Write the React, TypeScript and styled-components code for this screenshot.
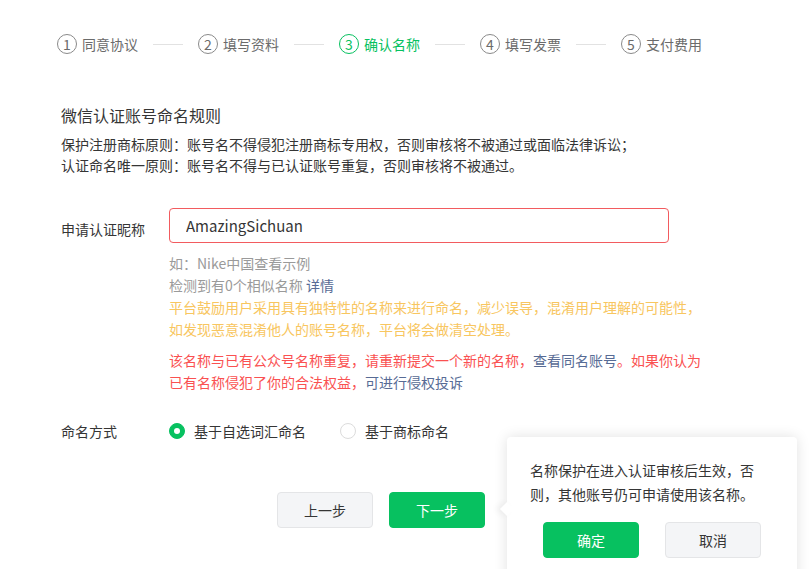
import React from "react";
import styled, { createGlobalStyle } from "styled-components";

const GlobalStyle = createGlobalStyle`
  html, body {
    margin: 0;
    padding: 0;
    background: #ffffff;
  }
  body {
    font-family: "Noto Sans CJK SC", "Liberation Sans", sans-serif;
    color: #353535;
    font-size: 14px;
    overflow: hidden;
  }
`;

const steps = ["同意协议", "填写资料", "确认名称", "填写发票", "支付费用"];
const currentStep = 2;

export default function App() {
  return (
    <Page>
      <GlobalStyle />
      <StepBar>
        {steps.map((name, i) => (
          <React.Fragment key={name}>
            {i > 0 && <StepLine />}
            <Step $active={i === currentStep}>
              <StepNum $active={i === currentStep}>{i + 1}</StepNum>
              <span>{name}</span>
            </Step>
          </React.Fragment>
        ))}
      </StepBar>

      <Content>
        <RuleTitle>微信认证账号命名规则</RuleTitle>
        <RuleText>
          保护注册商标原则：账号名不得侵犯注册商标专用权，否则审核将不被通过或面临法律诉讼；
          <br />
          认证命名唯一原则：账号名不得与已认证账号重复，否则审核将不被通过。
        </RuleText>

        <FormRow $top={32}>
          <Label>申请认证昵称</Label>
          <Field>
            <NameInput defaultValue="AmazingSichuan" />
            <Hints>
              <Hint>如：Nike中国查看示例</Hint>
              <Hint>
                检测到有0个相似名称 <Link>详情</Link>
              </Hint>
              <Warn>
                平台鼓励用户采用具有独特性的名称来进行命名，减少误导，混淆用户理解的可能性，如发现恶意混淆他人的账号名称，平台将会做清空处理。
              </Warn>
              <ErrorText>
                该名称与已有公众号名称重复，请重新提交一个新的名称，
                <Link>查看同名账号</Link>。如果你认为已有名称侵犯了你的合法权益，
                <Link>可进行侵权投诉</Link>
              </ErrorText>
            </Hints>
          </Field>
        </FormRow>

        <FormRow $top={27}>
          <RadioLabel>命名方式</RadioLabel>
          <RadioGroup>
            <RadioItem>
              <Radio $checked />
              基于自选词汇命名
            </RadioItem>
            <RadioItem>
              <Radio />
              基于商标命名
            </RadioItem>
          </RadioGroup>
        </FormRow>

        <Actions>
          <Button>上一步</Button>
          <Anchor>
            <Button $primary>下一步</Button>
            <Popover>
              <PopText>
                名称保护在进入认证审核后生效，否则，其他账号仍可申请使用该名称。
              </PopText>
              <PopActions>
                <Button $primary>确定</Button>
                <Button>取消</Button>
              </PopActions>
            </Popover>
          </Anchor>
        </Actions>
      </Content>
    </Page>
  );
}

const Page = styled.div`
  width: 812px;
  height: 569px;
  overflow: hidden;
  position: relative;
`;

const StepBar = styled.div`
  display: flex;
  align-items: center;
  padding: 34px 0 0 57px;
  height: 20px;
`;

const Step = styled.div<{ $active?: boolean }>`
  display: flex;
  align-items: center;
  gap: 5px;
  font-size: 14px;
  line-height: 20px;
  color: ${(p) => (p.$active ? "#07c160" : "#6b6b6b")};
`;

const StepNum = styled.span<{ $active?: boolean }>`
  width: 18px;
  height: 18px;
  border-radius: 50%;
  border: 1px solid ${(p) => (p.$active ? "#07c160" : "#8a8a8a")};
  color: ${(p) => (p.$active ? "#07c160" : "#6b6b6b")};
  display: flex;
  align-items: center;
  justify-content: center;
  font-size: 14px;
  line-height: 1;
`;

const StepLine = styled.div`
  width: 30px;
  height: 1px;
  background: #e2e2e2;
  margin: 0 15px 0 15px;
`;

const Content = styled.div`
  padding: 49px 0 0 61px;
`;

const RuleTitle = styled.div`
  font-size: 16px;
  line-height: 24px;
  color: #353535;
`;

const RuleText = styled.div`
  margin-top: 7px;
  font-size: 14px;
  line-height: 21px;
  color: #353535;
`;

const FormRow = styled.div<{ $top: number }>`
  display: flex;
  margin-top: ${(p) => p.$top}px;
`;

const Label = styled.div`
  width: 108px;
  flex-shrink: 0;
  padding-top: 10px;
  line-height: 22px;
  font-size: 14px;
  color: #353535;
`;

const RadioLabel = styled(Label)`
  padding-top: 0;
`;

const Field = styled.div`
  display: flex;
  flex-direction: column;
`;

const NameInput = styled.input`
  box-sizing: border-box;
  width: 500px;
  height: 35px;
  border: 1px solid #f25b5f;
  border-radius: 4px;
  padding: 0 16px;
  font-family: "Noto Sans CJK SC", "Liberation Sans", sans-serif;
  font-size: 15px;
  color: #353535;
  outline: none;
`;

const Hints = styled.div`
  width: 545px;
  margin-top: 9px;
  font-size: 14px;
  line-height: 22px;
`;

const Hint = styled.div`
  color: #9a9a9a;
`;

const Link = styled.span`
  color: #576b95;
`;

const Warn = styled.div`
  color: #f8c660;
`;

const ErrorText = styled.div`
  margin-top: 9px;
  color: #fa5151;
`;

const RadioGroup = styled.div`
  display: flex;
  align-items: center;
  gap: 34px;
`;

const RadioItem = styled.label`
  display: flex;
  align-items: center;
  gap: 9px;
  font-size: 14px;
  line-height: 22px;
  color: #353535;
`;

const Radio = styled.span<{ $checked?: boolean }>`
  box-sizing: border-box;
  width: 16px;
  height: 16px;
  border-radius: 50%;
  background: ${(p) => (p.$checked ? "#07c160" : "#fff")};
  border: 1px solid ${(p) => (p.$checked ? "#07c160" : "#dcdcdc")};
  display: flex;
  align-items: center;
  justify-content: center;
  &::after {
    content: "";
    display: ${(p) => (p.$checked ? "block" : "none")};
    width: 6px;
    height: 6px;
    border-radius: 50%;
    background: #fff;
  }
`;

const Actions = styled.div`
  display: flex;
  gap: 16px;
  margin-top: 50px;
  padding-left: 216px;
`;

const Button = styled.button<{ $primary?: boolean }>`
  box-sizing: border-box;
  width: 96px;
  height: 36px;
  border-radius: 4px;
  border: 1px solid ${(p) => (p.$primary ? "#07c160" : "#e4e5e7")};
  background: ${(p) => (p.$primary ? "#07c160" : "#f4f5f7")};
  color: ${(p) => (p.$primary ? "#fff" : "#353535")};
  font-family: "Noto Sans CJK SC", "Liberation Sans", sans-serif;
  font-size: 14px;
  padding: 0;
  cursor: pointer;
`;

const Anchor = styled.div`
  position: relative;
`;

const Popover = styled.div`
  position: absolute;
  left: calc(100% + 22px);
  top: -55px;
  width: 290px;
  height: 160px;
  box-sizing: border-box;
  padding: 21px 0 0 23px;
  background: #fff;
  border-radius: 4px;
  box-shadow: 0 0 14px rgba(0, 0, 0, 0.12);
  &::before {
    content: "";
    position: absolute;
    left: -5px;
    top: 67px;
    width: 10px;
    height: 10px;
    background: #fff;
    transform: rotate(45deg);
    box-shadow: -3px 3px 6px rgba(0, 0, 0, 0.06);
  }
`;

const PopText = styled.div`
  position: relative;
  width: 230px;
  font-size: 14px;
  line-height: 24px;
  color: #353535;
`;

const PopActions = styled.div`
  display: flex;
  gap: 26px;
  margin-top: 16px;
  padding-left: 13px;
`;
